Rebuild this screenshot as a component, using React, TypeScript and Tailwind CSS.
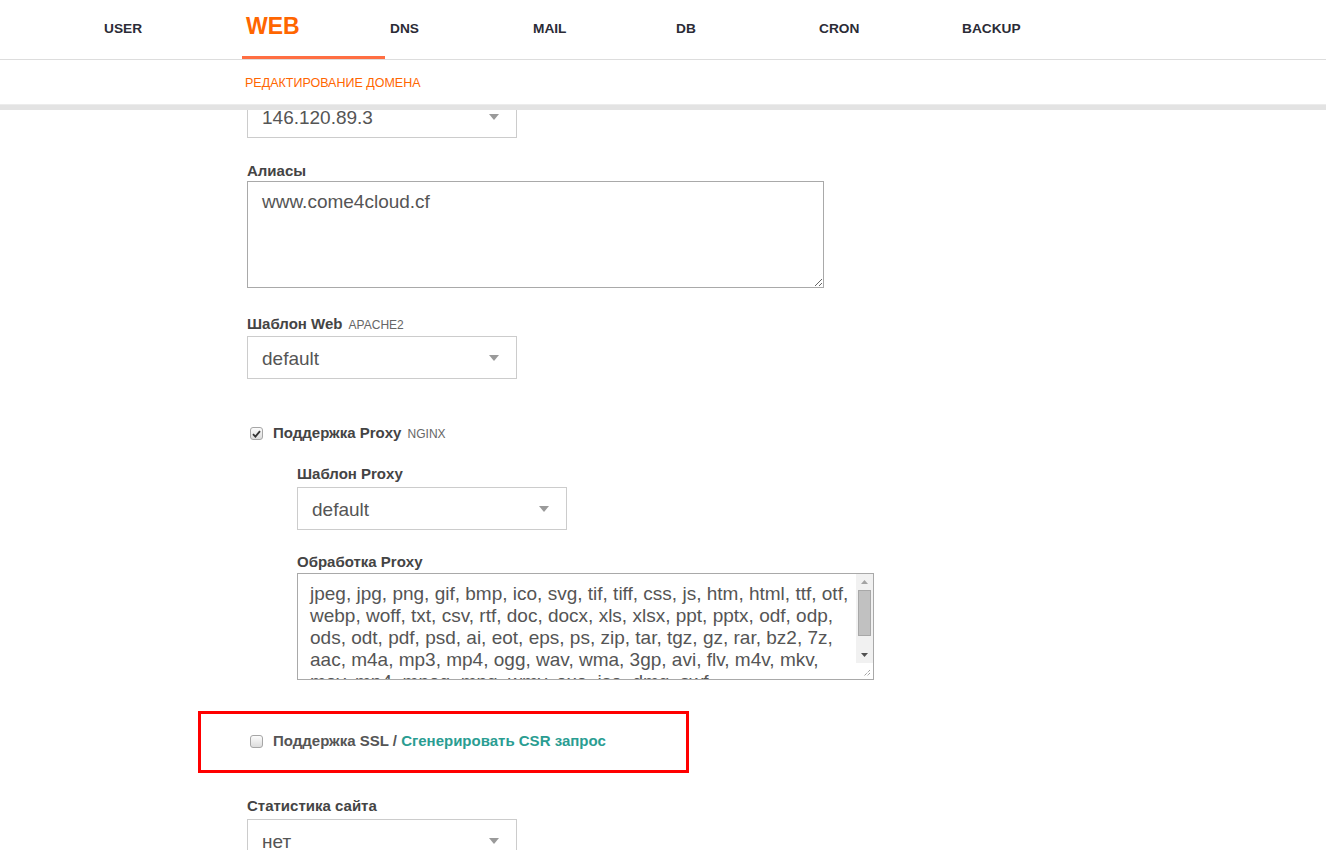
import React from 'react';

const proxyLines = [
  'jpeg, jpg, png, gif, bmp, ico, svg, tif, tiff, css, js, htm, html, ttf, otf,',
  'webp, woff, txt, csv, rtf, doc, docx, xls, xlsx, ppt, pptx, odf, odp,',
  'ods, odt, pdf, psd, ai, eot, eps, ps, zip, tar, tgz, gz, rar, bz2, 7z,',
  'aac, m4a, mp3, mp4, ogg, wav, wma, 3gp, avi, flv, m4v, mkv,',
  'mov, mp4, mpeg, mpg, wmv, exe, iso, dmg, swf',
];

const tabs = ['USER', 'WEB', 'DNS', 'MAIL', 'DB', 'CRON', 'BACKUP'];

function Select({ value }: { value: string }) {
  return (
    <div className="w-[270px] h-[43px] border border-[#cccccc] bg-white flex items-center justify-between pl-[14px] pr-[17px]">
      <span className="text-[19px] text-[#555] pt-[3px]">{value}</span>
      <svg width="10" height="6" viewBox="0 0 10 6">
        <path d="M0 0 L10 0 L5 6 Z" fill="#9a9a9a" />
      </svg>
    </div>
  );
}

function Checkbox({ checked }: { checked?: boolean }) {
  return (
    <span className="w-[13px] h-[13px] rounded-[3px] border border-[#a6a6a6] bg-gradient-to-b from-[#fcfcfc] to-[#dcdcdc] flex items-center justify-center shrink-0">
      {checked && (
        <svg width="9" height="8" viewBox="0 0 9 8">
          <path d="M1 4.2 L3.4 6.6 L8 1.2" stroke="#333" strokeWidth="1.8" fill="none" />
        </svg>
      )}
    </span>
  );
}

function Label({ children, className = '' }: { children: React.ReactNode; className?: string }) {
  return <div className={`h-4 leading-4 pt-[1px] text-[15px] font-bold text-[#444] ${className}`}>{children}</div>;
}

function Grip() {
  return (
    <svg width="8" height="8" viewBox="0 0 8 8">
      <path d="M7 1 L1 7 M7 4 L4 7" stroke="#777" strokeWidth="1" strokeDasharray="1 1" />
    </svg>
  );
}

export default function App() {
  return (
    <div className="min-h-screen bg-white font-['Liberation_Sans',Arial,sans-serif]">
      {/* Fixed top bar */}
      <div className="fixed top-0 left-0 right-0 z-10 bg-white">
        <div className="h-[60px] border-b border-[#dddddd] flex pl-[99px]">
          {tabs.map((t) =>
            t === 'WEB' ? (
              <div key={t} className="w-[143px] h-full flex items-center pl-[4px] border-b-[3px] border-[#ff6e42] pt-[3px]">
                <span className="text-[23px] font-bold text-[#ff6600] -mt-[7px]">{t}</span>
              </div>
            ) : (
              <div key={t} className="w-[143px] h-full flex items-center pl-[5px]">
                <span className="text-[13.7px] font-bold text-[#2b2b36] -mt-[1px]">{t}</span>
              </div>
            )
          )}
        </div>
        <div className="h-[44px] flex items-center pl-[245px]">
          <span className="text-[12.5px] text-[#ff6600] mt-[2px]">РЕДАКТИРОВАНИЕ ДОМЕНА</span>
        </div>
        <div className="h-[6px] bg-[#e3e3e3] border-t border-[#ececec]" />
      </div>

      {/* Form (scrolled) */}
      <div className="pt-[95px] pl-[247px] pb-10">
        <Select value="146.120.89.3" />

        <Label className="mt-[24px] mb-[3px]">Алиасы</Label>
        <textarea
          readOnly
          defaultValue="www.come4cloud.cf"
          className="block w-[577px] h-[107px] border border-[#a9a9a9] pl-[14px] pr-3 pt-[9px] text-[19px] leading-[22px] text-[#555] outline-none resize-y font-['Liberation_Sans',Arial,sans-serif]"
        />

        <Label className="mt-[27px] mb-[5px]">
          Шаблон Web <span className="text-[12px] font-normal text-[#666] ml-[2px]">APACHE2</span>
        </Label>
        <Select value="default" />

        <div className="mt-[46px] h-4 flex items-center pl-[3px] pt-[1px]">
          <Checkbox checked />
          <span className="ml-[10px] text-[15px] font-bold text-[#444]">
            Поддержка Proxy <span className="text-[12px] font-normal text-[#666] ml-[2px]">NGINX</span>
          </span>
        </div>

        <div className="pl-[50px]">
          <Label className="mt-[24px] mb-[6px]">Шаблон Proxy</Label>
          <Select value="default" />

          <Label className="mt-[23px] mb-[4px]">Обработка Proxy</Label>
          <div className="w-[577px] h-[107px] border border-[#a9a9a9] flex bg-white">
            <div className="flex-1 overflow-hidden pl-[12px] pt-[9px] text-[19px] leading-[22px] text-[#555]">
              {proxyLines.map((l) => (
                <div key={l} className="whitespace-nowrap">{l}</div>
              ))}
            </div>
            {/* scrollbar */}
            <div className="w-[17px] flex flex-col bg-[#f1f1f1]">
              <div className="h-[16px] flex items-center justify-center">
                <svg width="7" height="4" viewBox="0 0 7 4"><path d="M0 4 L7 4 L3.5 0 Z" fill="#a3a3a3" /></svg>
              </div>
              <div className="flex-1 px-[2px]">
                <div className="h-[46px] bg-[#c1c1c1] border border-[#a8a8a8]" />
              </div>
              <div className="h-[16px] flex items-center justify-center">
                <svg width="7" height="4" viewBox="0 0 7 4"><path d="M0 0 L7 0 L3.5 4 Z" fill="#505050" /></svg>
              </div>
              <div className="h-[16px] bg-white flex items-end justify-end pr-[2px] pb-[2px]">
                <Grip />
              </div>
            </div>
          </div>
        </div>

        {/* SSL (highlighted) */}
        <div className="-ml-[49px] mt-[31px] w-[491px] h-[62px] border-[3px] border-[#ff0000] flex items-center pl-[49px] pb-[2px]">
          <Checkbox />
          <span className="ml-[10px] text-[15px] font-bold text-[#555]">
            Поддержка SSL / <span className="text-[#2a9d92]">Сгенерировать CSR запрос</span>
          </span>
        </div>

        <Label className="mt-[24px] mb-[6px]">Статистика сайта</Label>
        <Select value="нет" />
      </div>
    </div>
  );
}
